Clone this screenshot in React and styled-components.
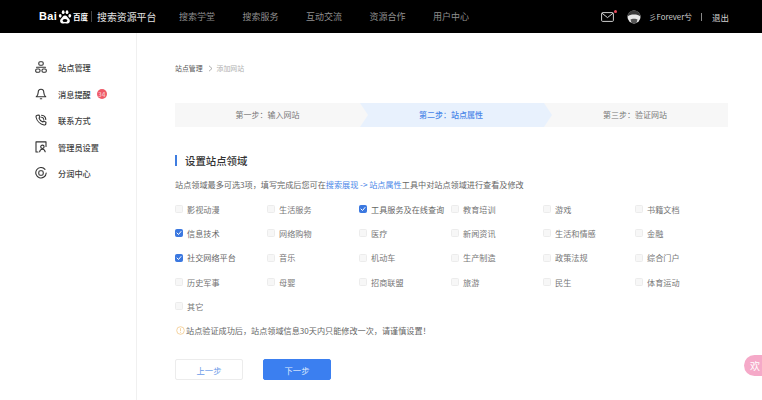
import React from "react";
import styled, { createGlobalStyle } from "styled-components";

const Global = createGlobalStyle`
  html, body { margin: 0; padding: 0; background: #fff; }
  body { font-family: "Noto Sans CJK SC", "Noto Sans", sans-serif; }
  * { box-sizing: border-box; }
`;
const Page = styled.div`width: 762px; height: 400px; overflow: hidden; position: relative; display: flex; flex-direction: column;`;
const Header = styled.header`height: 33px; background: #000; display: flex; align-items: center; padding-left: 39px; color: #fff; flex: none;`;
const Logo = styled.div`display: flex; align-items: center; width: 118px; height: 18px; white-space: nowrap; flex: none;`;
const LogoBai = styled.span`font: bold 11px/1 "Liberation Sans", sans-serif; letter-spacing: 0.3px;`;
const LogoDu = styled.span`font-size: 7.5px; font-weight: 700; line-height: 1; flex: none;`;
const LogoRule = styled.i`width: 1px; height: 11px; background: #444; margin: 0 5px 0 3px; flex: none;`;
const LogoText = styled.span`font-size: 9.9px; color: #e4e4e4;`;
const Nav = styled.nav`display: flex; gap: 27.5px; margin-left: 22px; font-size: 9px; color: #8f8f8f;`;
const NavItem = styled.span`white-space: nowrap;`;
const HeaderRight = styled.div`margin-left: auto; display: flex; align-items: center; padding-right: 33px; font-size: 8.5px; color: #d2d2d2;`;
const Mail = styled.span`position: relative; display: flex; width: 13px; height: 10px; margin-right: 13px;`;
const MailDot = styled.i`position: absolute; right: -3px; top: -2px; width: 3px; height: 3px; border-radius: 50%; background: #e8485a;`;
const Avatar = styled.span`display: flex; width: 14px; height: 14px; margin-right: 8px;`;
const UserName = styled.span`font-size: 7.8px; white-space: nowrap;`;
const Divider = styled.i`width: 1px; height: 8px; background: #888; margin: 0 10px 0 9px;`;
const Body = styled.div`flex: 1; display: flex; min-height: 0;`;
const Sidebar = styled.aside`width: 137px; flex: none; border-right: 1px solid #f0f0f0; padding: 21px 0 0 35px;`;
const SideItem = styled.div`height: 26.5px; display: flex; align-items: center; font-size: 8.2px; color: #3f3f3f; font-weight: 500; white-space: nowrap;`;
const SideIcon = styled.span`display: flex; width: 12px; height: 12px; margin-right: 11px; color: #333;`;
const Badge = styled.span`margin-left: 6px; width: 10px; height: 10px; border-radius: 50%; background: #ef5a68; color: #f7c8cc; font-size: 6.5px; line-height: 10px; text-align: center;`;
const Main = styled.main`flex: 1; padding: 28px 34px 0 38px; min-width: 0;`;
const Crumbs = styled.div`height: 14px; display: flex; align-items: center; font-size: 6.9px; color: #555;`;
const CrumbSep = styled.span`display: flex; margin: 0 4px 0 5px; color: #999;`;
const CrumbLast = styled.span`color: #b0b0b0;`;
const Steps = styled.div`margin-top: 28px; height: 24px; display: flex; background: #f7f7f7;`;
const Step = styled.div`
  display: flex; align-items: center; justify-content: center; white-space: nowrap; padding-bottom: 2px;
  font-size: 8px; color: ${p => (p.$active ? "#4a86e8" : "#777")}; font-weight: ${p => (p.$active ? 500 : 400)};
`;
const FirstStep = styled(Step)`width: 185px;`;
const LastStep = styled(Step)`flex: 1; padding-right: 10px;`;
const ActiveStep = styled(Step)`
  width: 192px; background: #e8f1fd; padding-right: 10px;
  clip-path: polygon(0 0, calc(100% - 8px) 0, 100% 50%, calc(100% - 8px) 100%, 0 100%, 8px 50%);
`;
const Title = styled.h2`
  margin: 28px 0 0; height: 11px; border-left: 2px solid #3f7de0; padding-left: 8px;
  display: flex; align-items: center; font-size: 10.4px; font-weight: 500; color: #333; white-space: nowrap;
`;
const Desc = styled.p`margin: 8px 0 0; height: 21px; line-height: 21px; font-size: 8.15px; color: #666; white-space: nowrap;`;
const Link = styled.span`color: #4a86e8;`;
const Grid = styled.div`margin-top: 2px; display: grid; grid-template-columns: repeat(6, 92px); grid-auto-rows: 24.3px;`;
const Option = styled.label`display: flex; align-items: center; font-size: 8.15px; color: #777; white-space: nowrap;`;
const OptionOn = styled(Option)`color: #666;`;
const Box = styled.span`
  width: 8px; height: 8px; flex: none; margin-right: 4px; border-radius: 1.5px; display: flex;
  background: ${p => (p.$on ? "#3b78e0" : "#f7f7f7")}; border: 1px solid ${p => (p.$on ? "#3b78e0" : "#ececec")};
`;
const Tip = styled.div`margin-top: 5px; height: 14px; display: flex; align-items: center; font-size: 8.15px; color: #666; white-space: nowrap;`;
const TipIcon = styled.span`display: flex; width: 9px; height: 9px; margin: 0 1px 0 1px;`;
const Actions = styled.div`margin-top: 22px; display: flex; gap: 20px;`;
const Button = styled.button`
  width: 68px; height: 21px; padding: 0; border-radius: 2px; font: 400 8.3px "Noto Sans CJK SC", sans-serif;
  border: 1px solid ${p => (p.$primary ? "#3b7ff0" : "#ececec")};
  background: ${p => (p.$primary ? "#3b7ff0" : "#fff")};
  color: ${p => (p.$primary ? "#dfeafd" : "#6b9be8")};
`;
const Float = styled.div`
  position: absolute; right: 0; top: 355px; width: 18px; height: 21px; border-radius: 11px 0 0 11px;
  background: #f5a9c8; color: #fff; font-size: 10px; line-height: 21px; padding-left: 6px; overflow: hidden; white-space: nowrap;
`;

const stroke = { fill: "none", stroke: "currentColor", strokeWidth: 1.1, strokeLinecap: "round", strokeLinejoin: "round" };
const Ic = ({ children }) => <svg width="12" height="12" viewBox="0 0 12 12" {...stroke}>{children}</svg>;

const SiteIcon = () => <Ic><rect x="3.8" y="0.8" width="4.4" height="3.4" rx="1.2" /><path d="M1.5 6.2H10.5" /><rect x="0.7" y="8" width="4.3" height="3.2" rx="1.2" /><rect x="7" y="8" width="4.3" height="3.2" rx="1.2" /></Ic>;
const BellIcon = () => <Ic><path d="M6 1.2C4 1.2 3.2 2.8 3.2 4.4C3.2 6.4 2.6 7.4 1.2 8.8H10.8C9.4 7.4 8.8 6.4 8.8 4.4C8.8 2.8 8 1.2 6 1.2Z" /><path d="M5.3 10.8H6.7" /></Ic>;
const PhoneIcon = () => <Ic><path d="M2.2 1.2L4 1L5 3.2L4 4.2C4.5 5.8 6 7.4 7.8 8L8.8 7L11 8.2L10.8 10C10.6 10.8 9.8 11.2 9 11C5.2 10.2 1.8 6.8 1 3C.9 2.2 1.4 1.4 2.2 1.2Z" /><path d="M6.6 1.2C8.8 1.4 10.6 3.2 10.8 5.4M6.6 3.2C7.7 3.4 8.6 4.3 8.8 5.4" /></Ic>;
const AdminIcon = () => <Ic><path d="M3.6 .9H1V11H3M3.6 .9H11V5.5" /><circle cx="7.4" cy="5.8" r="1.7" /><path d="M4.6 10.8C4.9 9.2 6 8.2 7.4 8.2S9.9 9.2 10.2 10.8" /></Ic>;
const ShareIcon = () => <Ic><path d="M10 2.4A5.2 5.2 0 1 0 11.2 6" /><rect x="3.8" y="3.8" width="4.4" height="4.4" rx="1.4" /></Ic>;

const check = (
  <svg width="6" height="6" viewBox="0 0 6 6" fill="none" stroke="#fff" strokeWidth="1" strokeLinecap="round" strokeLinejoin="round">
    <path d="M1 3L2.5 4.5L5 1.5" />
  </svg>
);

const rows = ["影视动漫","生活服务","工具服务及在线查询","教育培训","游戏","书籍文档","信息技术","网络购物","医疗","新闻资讯","生活和情感","金融","社交网络平台","音乐","机动车","生产制造","政策法规","综合门户","历史军事","母婴","招商联盟","旅游","民生","体育运动","其它"];
const checked = new Set(["工具服务及在线查询","信息技术","社交网络平台"]);

const sideItems = [
  [<SiteIcon />, "站点管理"],
  [<BellIcon />, "消息提醒", "34"],
  [<PhoneIcon />, "联系方式"],
  [<AdminIcon />, "管理员设置"],
  [<ShareIcon />, "分润中心"],
];

export default function App() {
  return (
    <Page>
      <Global />
      <Header>
        <Logo>
          <LogoBai>Bai</LogoBai>
          <svg width="16" height="16" viewBox="0 0 15 15" fill="#fff" style={{ flex: "none" }}>
            <ellipse cx="3" cy="6.4" rx="1.3" ry="1.7" />
            <ellipse cx="5.8" cy="3" rx="1.3" ry="1.8" />
            <ellipse cx="9.4" cy="3" rx="1.3" ry="1.8" />
            <ellipse cx="12" cy="6.4" rx="1.3" ry="1.7" />
            <path d="M7.5 6C5.6 6 5 8 3.8 9.2C2.4 10.6 2.6 13.4 5 13.6C6 13.7 6.6 13.3 7.5 13.3S9 13.7 10 13.6C12.4 13.4 12.6 10.6 11.2 9.2C10 8 9.4 6 7.5 6Z" />
            <ellipse cx="7.5" cy="10.8" rx="2.3" ry="1.5" fill="#000" />
          </svg>
          <LogoDu>百度</LogoDu>
          <LogoRule />
          <LogoText>搜索资源平台</LogoText>
        </Logo>
        <Nav>
          {["搜索学堂","搜索服务","互动交流","资源合作","用户中心"].map(t => <NavItem key={t}>{t}</NavItem>)}
        </Nav>
        <HeaderRight>
          <Mail>
            <svg width="13" height="10" viewBox="0 0 13 10" fill="none" stroke="#e6e6e6" strokeWidth="0.9">
              <rect x="0.6" y="0.6" width="11.8" height="8.8" rx="1" />
              <path d="M1 1.2L6.5 5.6L12 1.2" />
            </svg>
            <MailDot />
          </Mail>
          <Avatar>
            <svg width="14" height="14" viewBox="0 0 14 14">
              <circle cx="7" cy="7" r="6.5" fill="#e9e9e9" />
              <path d="M.6 6.5C1 2.6 3.6.5 7 .5S13 2.6 13.4 6.5C11.5 5 10 4.6 7 4.6S2.5 5 .6 6.5Z" fill="#3a3a3a" />
              <path d="M3.5 9.5C4.5 8.5 9.5 8.5 10.5 9.5L9.5 13H4.5Z" fill="#555" />
            </svg>
          </Avatar>
          <UserName>彡Forever兮</UserName>
          <Divider />
          <span>退出</span>
        </HeaderRight>
      </Header>
      <Body>
        <Sidebar>
          {sideItems.map(([icon, label, badge]) => (
            <SideItem key={label}>
              <SideIcon>{icon}</SideIcon>
              {label}
              {badge && <Badge>{badge}</Badge>}
            </SideItem>
          ))}
        </Sidebar>
        <Main>
          <Crumbs>
            站点管理
            <CrumbSep>
              <svg width="5" height="7" viewBox="0 0 5 7" fill="none" stroke="currentColor" strokeWidth="0.8"><path d="M1 .8L4 3.5L1 6.2" /></svg>
            </CrumbSep>
            <CrumbLast>添加网站</CrumbLast>
          </Crumbs>
          <Steps>
            <FirstStep>第一步：输入网站</FirstStep>
            <ActiveStep $active>第二步：站点属性</ActiveStep>
            <LastStep>第三步：验证网站</LastStep>
          </Steps>
          <Title>设置站点领域</Title>
          <Desc>
            站点领域最多可选3项，填写完成后您可在<Link>搜索展现 -&gt; 站点属性</Link>工具中对站点领域进行查看及修改
          </Desc>
          <Grid>
            {rows.map(t => {
              const on = checked.has(t);
              const Row = on ? OptionOn : Option;
              return (
                <Row key={t}>
                  <Box $on={on}>{on && check}</Box>
                  {t}
                </Row>
              );
            })}
          </Grid>
          <Tip>
            <TipIcon>
              <svg width="9" height="9" viewBox="0 0 9 9" fill="none" stroke="#f3c98a" strokeWidth="0.8">
                <circle cx="4.5" cy="4.5" r="3.8" />
                <path d="M4.5 2.2V5.2M4.5 6V6.8" />
              </svg>
            </TipIcon>
            站点验证成功后，站点领域信息30天内只能修改一次，请谨慎设置！
          </Tip>
          <Actions>
            <Button>上一步</Button>
            <Button $primary>下一步</Button>
          </Actions>
        </Main>
      </Body>
      <Float>欢</Float>
    </Page>
  );
}
